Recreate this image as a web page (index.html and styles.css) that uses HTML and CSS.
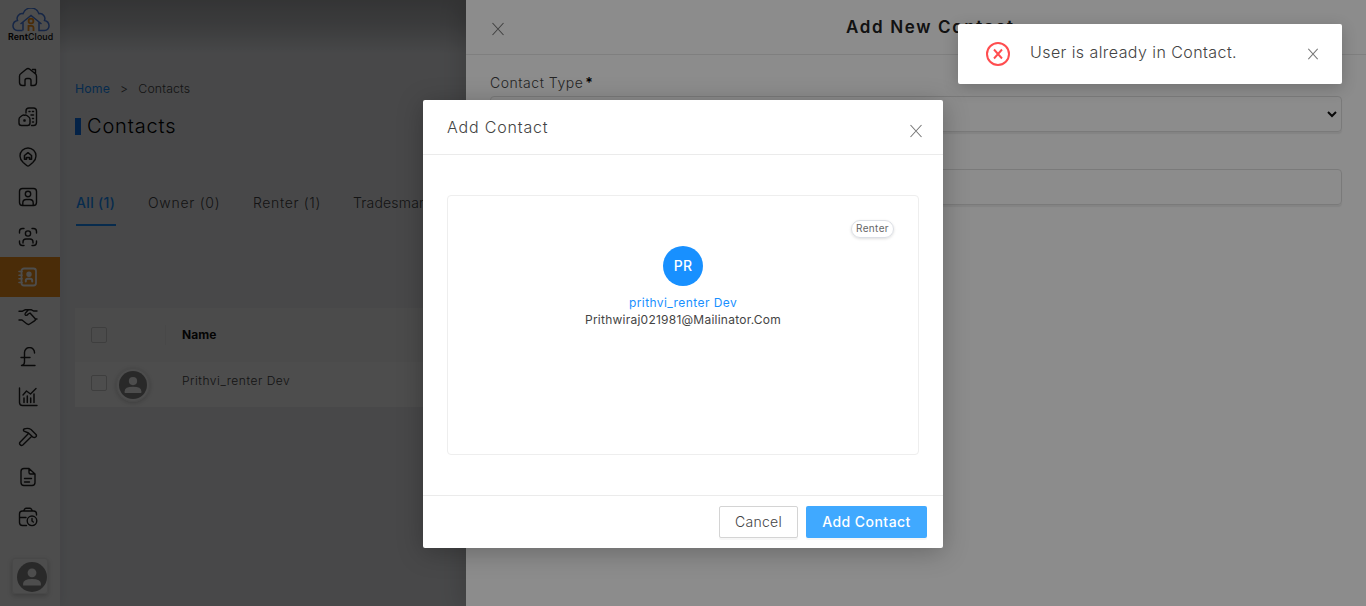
FILE: index.html
```html
<!DOCTYPE html>
<html lang="en">
<head>
<meta charset="utf-8">
<title>RentCloud - Contacts</title>
<link rel="stylesheet" href="styles.css">
</head>
<body>
<div class="app">
  <aside class="sidebar">
    <div class="logo">
      <svg width="38" height="24" viewBox="0 0 38 24" fill="none" stroke="#4a80e8" stroke-width="1.5">
        <path d="M10.500 22.500H5.500a4.500 4.500 0 0 1-4.500-5q.3-4.200 4.500-5a5 5 0 0 1 5.500-6.800a8.500 8.500 0 0 1 16 0a5 5 0 0 1 5.500 6.800q4.200.8 4.500 5a4.500 4.500 0 0 1-4.500 5H27V14.500M11 22.500v-8M8.500 16 19 7.500 29.500 16"/>
        <g stroke="#f7941d" stroke-width="1.800"><circle cx="19" cy="13" r="2.400"/><path d="M16.500 23v-5.200h3q2 0 2 2V23"/></g>
      </svg>
      <span class="brand"><b>Rent</b>Cloud</span>
    </div>
    <nav class="nav">
      <a class="nav-item"><svg class="icon" viewBox="0 0 20 20"><path d="M7 18.500H4.500a3 3 0 0 1-3-3V9.200a3 3 0 0 1 1.200-2.400L8.200 2.200a3 3 0 0 1 3.600 0l5.500 4.600a3 3 0 0 1 1.200 2.400v6.300a3 3 0 0 1-3 3H13v-5a2 2 0 0 0-2-2H9a2 2 0 0 0-2 2zM14.500 2.500h3v4"/></svg></a>
      <a class="nav-item"><svg class="icon" viewBox="0 0 20 20"><path d="M8 6V4q0-3 3-3h4.500q3 0 3 3v11.500q0 3-3 3h-2M6.700 8.300q-1.100-.6-2.200 0L2.200 10Q1 10.800 1 12.500V16q0 2.500 2.500 2.500h6Q12 18.500 12 16v-3.500q0-1.700-1.200-2.500L8.500 8.300q-.9-.6-1.800 0"/><path d="M11 4.500h1M14.500 4.500h1M13 8h2.500M14.500 11.500h1M14.500 15h1M6 13h1v1H6z" stroke-width="1.500"/></svg></a>
      <a class="nav-item"><svg class="icon" viewBox="0 0 20 20"><path d="M2 9a8 8 0 0 1 16 0q0 3.500-3.200 6.500l-3.500 3q-1.300.9-2.600 0l-3.500-3Q2 12.500 2 9z"/><path d="M6.500 8.500 10 5.700l3.500 2.800v3.700H11.500v-1.700h-3v1.700h-2z" stroke-width="1.600"/></svg></a>
      <a class="nav-item"><svg class="icon" viewBox="0 0 20 20"><rect x="1.500" y="1.500" width="17" height="17" rx="3"/><circle cx="10" cy="7" r="2.700"/><path d="M4.800 18v-2q0-3.500 3.500-3.500h3.400q3.500 0 3.500 3.500v2"/></svg></a>
      <a class="nav-item"><svg class="icon" viewBox="0 0 20 20"><path d="M1.500 6V4.500q0-3 3-3H6M14 1.500h1.500q3 0 3 3V6M18.500 14v1.500q0 3-3 3H14M6 18.500H4.500q-3 0-3-3V14"/><circle cx="10" cy="6.500" r="2.600"/><path d="M5 16v-1q0-3 3-3h4q3 0 3 3v1"/></svg></a>
      <a class="nav-item active"><svg class="icon" viewBox="0 0 20 20"><rect x="3.500" y="1.500" width="14.500" height="17" rx="2.500" stroke-width="1.800"/><path d="M1 4.500h3M1 8.200h3M1 11.800h3M1 15.500h3" stroke-width="1.600"/><circle cx="11" cy="7.300" r="2" fill="#fff"/><path d="M7.800 14.500v-.8q0-2 2-2h2.400q2 0 2 2v.8" stroke-width="2"/></svg></a>
      <a class="nav-item"><svg class="icon" viewBox="0 0 20 20"><path d="M1 4.200h3.500L7 2.800h3.500L7.500 6q-1 1.800.2 2.300T10.200 7L12 6l5 5.500q1.200 1.500-.5 2.300L11.700 17q-1.500 1-3-.2L4 13H1M9 2.800h4.500L15.500 4H19M19 12h-2"/></svg></a>
      <a class="nav-item"><svg class="icon" viewBox="0 0 20 20"><path d="M16.500 6V5.500a5 5 0 0 0-10 0V15q0 3-3 3.500h13.500M3 10.500h9"/></svg></a>
      <a class="nav-item"><svg class="icon" viewBox="0 0 20 20"><path d="M1.500 1v14.500q0 3 3 3H19M5 8l3.500-4 4 3L18 1.500"/><path d="M6 11v4.500M9.300 9v6.500M12.700 11v4.500M16 7v8.500" stroke-width="1.500"/></svg></a>
      <a class="nav-item"><svg class="icon" viewBox="0 0 20 20"><path d="M6 2q4-1.500 7 .5l5 5q1 1.500-.3 2.500t-2.700.2L10.500 6 6 4.200Q4.800 3 6 2zM10 7l-8 8.200q-1 1.300.2 2.600t2.600.2l8.200-8"/></svg></a>
      <a class="nav-item"><svg class="icon" viewBox="0 0 20 20"><path d="M11 1.500H6q-3 0-3 3v11q0 3 3 3h8q3 0 3-3V7zV5.500q0 1.500 1.500 1.500H17M6.500 11.500h7M6.500 15h5"/></svg></a>
      <a class="nav-item"><svg class="icon" viewBox="0 0 20 20"><path d="M8.500 18.500h-4q-3 0-3-3V7q0-3 3-3h11q3 0 3 3v1M5.500 4l1-1.700Q7 1.200 8 1.200h4q1 0 1.500 1.100l1 1.700M1.500 10.500H8"/><circle cx="14" cy="13.800" r="4.800"/><path d="M14 11.500V14l1.300 1"/></svg></a>
    </nav>
    <div class="profile"><svg width="30" height="30" viewBox="0 0 32 32"><circle cx="16" cy="16" r="16" fill="#8b8b8b"/><circle cx="16" cy="11.500" r="4.700" fill="#fff"/><path d="M6.500 25v-2q0-5 9.500-5t9.500 5v2z" fill="#fff"/></svg></div>
  </aside>
  <main class="content">
    <div class="breadcrumb"><a class="link">Home</a><span>&gt;</span><span>Contacts</span></div>
    <h1 class="page-title">Contacts</h1>
    <div class="tabs"><span class="tab selected">All (1)</span><span class="tab owner">Owner (0)</span><span class="tab renter">Renter (1)</span><span class="tab">Tradesman (0)</span></div>
    <div class="table">
      <div class="row head"><i class="checkbox"></i><i class="divider"></i><b>Name</b></div>
      <div class="row"><i class="checkbox"></i><span class="avatar"><svg width="28" height="28" viewBox="0 0 32 32"><circle cx="16" cy="16" r="16" fill="#8b8b8b"/><circle cx="16" cy="11.500" r="4.700" fill="#fff"/><path d="M6.500 25v-2q0-5 9.500-5t9.500 5v2z" fill="#fff"/></svg></span><span class="cell-name">Prithvi_renter Dev</span></div>
    </div>
  </main>
</div>
<div class="mask top-shade"></div>
<section class="drawer">
  <header class="drawer-head"><svg class="close" width="12" height="14" viewBox="0 0 12 14"><path d="m.5 1 11 12M11.500 1l-11 12"/></svg><h2>Add New Contact</h2></header>
  <div class="drawer-body">
    <label class="field-label">Contact Type<b>*</b></label>
    <div class="field select"><svg width="10" height="7" viewBox="0 0 10 7"><path d="m1 1 4 4 4-4" fill="none" stroke="#111" stroke-width="2"/></svg></div>
    <div class="field"></div>
  </div>
</section>
<div class="mask"></div>
<section class="modal">
  <header class="modal-head"><h3>Add Contact</h3><svg class="close" width="12" height="14" viewBox="0 0 12 14"><path d="m.5 1 11 12M11.500 1l-11 12"/></svg></header>
  <div class="modal-body">
    <div class="card">
      <span class="tag">Renter</span>
      <div class="initials">PR</div>
      <a class="person">prithvi_renter Dev</a>
      <div class="email">Prithwiraj021981@Mailinator.Com</div>
    </div>
  </div>
  <footer class="modal-foot"><button class="btn cancel">Cancel</button><button class="btn primary">Add Contact</button></footer>
</section>
<div class="toast">
  <svg width="24" height="24" viewBox="0 0 24 24" fill="none" stroke="#ff4d4f"><circle cx="12" cy="12" r="11" stroke-width="2"/><path d="m8 7.500 8 9M16 7.500l-8 9" stroke-width="1.900"/></svg>
  <span class="toast-text">User is already in Contact.</span>
  <svg class="close" width="10" height="12" viewBox="0 0 10 12"><path d="m.3.800 9.400 10.400M9.700.8.300 11.200"/></svg>
</div>
</body>
</html>
```
FILE: styles.css
```css
* { box-sizing: border-box; }
body { margin: 0; height: 606px; overflow: hidden; font-family: Inter, "Open Sans", sans-serif; font-weight: 300; color: #444; }
h1, h2, h3 { margin: 0; }
svg { display: block; flex: none; }
.app { display: flex; height: 606px; background: #eff1f5; }
.sidebar { width: 60px; background: #fff; display: flex; flex-direction: column; flex: none; box-shadow: 2px 0 12px #00000012; }
.logo { height: 57px; padding: 8px 0 0 8px; display: flex; flex-direction: column; }
.logo svg { margin-left: 4px; }
.brand { margin-top: 1px; font-size: 8.800px; line-height: 8px; letter-spacing: .1px; font-weight: 500; color: #111; }
.nav-item { height: 40px; display: flex; align-items: center; padding-left: 18px; }
.icon { width: 20px; height: 20px; fill: none; stroke: #222; stroke-width: 1.4; stroke-linejoin: round; stroke-linecap: round; }
.active { background: #f7941d; }
.active .icon { stroke: #fff; }
.profile { width: 36px; height: 36px; margin: 21px 0 0 12px; padding: 3px 0 0 4px; border: 1px solid #eee; border-radius: 3px; box-shadow: 0 2px 5px #0003; }
.content { flex: 1; padding: 80px 0 0 15px; }
.breadcrumb { display: flex; gap: 10px; height: 17px; align-items: center; font-size: 12.3px; letter-spacing: .16px; font-weight: 300; }
.link { color: #1890ff; font-weight: 400; }
.page-title { margin-top: 21px; height: 17px; line-height: 17px; border-left: 6px solid #1273eb; padding-left: 6px; font-weight: 300; font-size: 20px; letter-spacing: .85px; color: #000; }
.tabs { display: flex; height: 46px; margin: 45px 0 0 1px; font-size: 14px; letter-spacing: .72px; }
.tab { height: 46px; line-height: 46px; margin-right: 32px; white-space: nowrap; }
.tab:last-child { letter-spacing: .2px; }
.selected { width: 40px; color: #1890ff; border-bottom: 2px solid #1890ff; font-weight: 500; font-size: 14px; letter-spacing: .35px; }
.owner { width: 73px; }
.renter { width: 68px; letter-spacing: .65px; }
.table { margin-top: 82px; background: #fff; }
.row { height: 45px; display: flex; align-items: center; padding: 0 0 3px 16px; font-size: 12px; }
.row.head { height: 54px; padding-bottom: 0; background: #fafafa; }
.checkbox { width: 16px; height: 16px; border: 1px solid #d0d0d0; border-radius: 2px; }
.divider { width: 1px; height: 20px; margin: 0 16px 0 58px; background: #eee; }
.head b { margin-top: -2px; font-weight: 700; letter-spacing: .1px; color: #111; }
.avatar { width: 34px; height: 34px; margin: 4px 0 0 9px; padding: 2px; border: 1px solid #eee; border-radius: 50%; box-shadow: 0 1px 4px #0003; }
.cell-name { margin: -5px 0 0 32px; letter-spacing: .53px; }
.mask { position: absolute; inset: 0; background: rgba(0,0,0,.45); }
.top-shade::after { content: ""; position: absolute; left: 60px; top: 0; right: 0; height: 54px; background: linear-gradient(rgba(0,0,0,.27), rgba(0,0,0,.18) 45%, transparent); }
.drawer { position: absolute; left: 466px; top: 0; width: 900px; height: 606px; background: #fff; box-shadow: -6px 0 20px #0002; }
.drawer-head { height: 55px; border-bottom: 1px solid #e8e8e8; display: flex; align-items: center; padding-left: 26px; }
.drawer-head .close { margin-top: 3px; }
.close path { fill: none; stroke: #777; stroke-width: 1.1; }
h2 { width: 168px; margin-left: 342px; color: #222; font-size: 17px; font-weight: 600; letter-spacing: 1.65px; white-space: nowrap; }
.drawer-body { padding: 18px 24px; }
.field-label { display: block; height: 23px; line-height: 19px; font-size: 14px; letter-spacing: .53px; }
.field-label b { margin-left: 2px; color: #000; font-weight: 600; }
.field { height: 36px; border: 1px solid #dfdfdf; border-radius: 4px; box-shadow: 0 2px 1px #0001; }
.select { margin-bottom: 37px; display: flex; align-items: center; justify-content: flex-end; padding-right: 4px; }
.modal { position: absolute; left: 423px; top: 100px; width: 520px; height: 448px; background: #fff; border-radius: 2px; box-shadow: 0 4px 26px #00000042; }
.modal-head { height: 55px; border-bottom: 1px solid #ebebeb; display: flex; justify-content: space-between; align-items: center; padding: 0 21px 0 24px; }
.modal-head .close { margin-top: 8px; }
h3 { font-size: 16px; font-weight: 300; letter-spacing: .82px; }
.modal-body { height: 340px; padding: 40px 24px; }
.card { height: 260px; border: 1px solid #eee; border-radius: 4px; padding-top: 24px; display: flex; flex-direction: column; align-items: center; }
.tag { align-self: flex-end; width: 43px; height: 18px; margin-right: 24px; border: 1px solid #dcdfe5; border-radius: 9px; box-shadow: 0 1px 3px #0002; font-size: 10px; line-height: 15px; letter-spacing: .35px; text-align: center; font-weight: 400; color: #666; }
.initials { width: 40px; height: 40px; margin-top: 8px; border-radius: 50%; background: #1890ff; color: #fff; line-height: 40px; text-align: center; font-size: 14px; letter-spacing: .3px; font-weight: 500; }
.person { margin-top: 8px; color: #1890ff; font-size: 12px; line-height: 18px; letter-spacing: .42px; font-weight: 400; }
.email { color: #444; font-size: 12px; line-height: 16px; letter-spacing: .24px; font-weight: 400; }
.modal-foot { height: 53px; border-top: 1px solid #ebebeb; display: flex; justify-content: flex-end; gap: 8px; padding: 10px 16px 0; }
.btn { height: 32px; padding: 0 0 1px; font: 300 14px Inter, sans-serif; letter-spacing: .25px; border-radius: 2px; box-shadow: 0 2px 0 #00000009; }
.cancel { width: 79px; background: #fff; border: 1px solid #d4d4d4; color: #444; }
.primary { width: 121px; background: #40a9ff; border: 0; color: #fff; font-weight: 500; letter-spacing: .45px; }
.toast { position: absolute; left: 958px; top: 24px; width: 384px; height: 60px; background: #fff; border-radius: 2px; box-shadow: 0 4px 16px #0003; display: flex; align-items: center; padding: 0 24px 0 28px; }
.toast-text { margin: -4px auto 0 20px; font-size: 16px; letter-spacing: .43px; }
```
